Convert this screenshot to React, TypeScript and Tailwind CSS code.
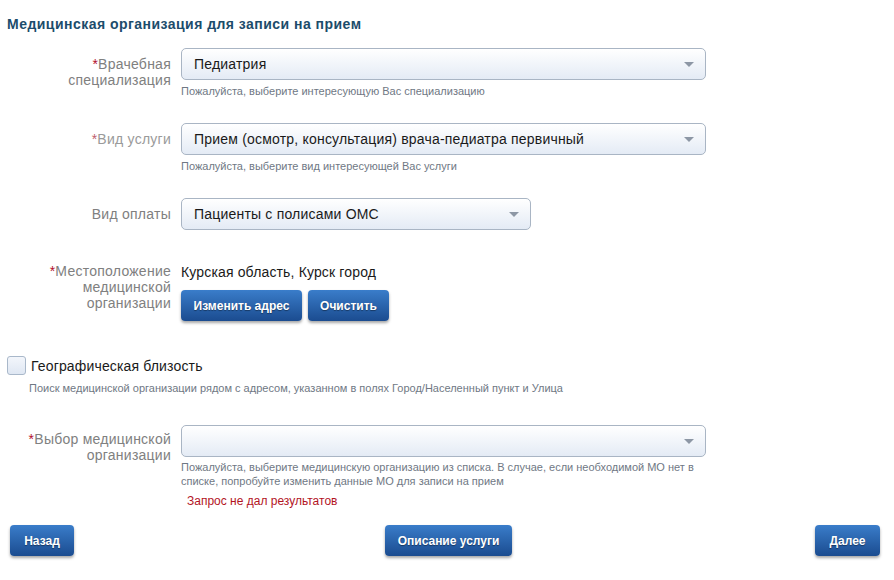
import React from "react";

const font = { fontFamily: '"Liberation Sans", Arial, sans-serif' };

function Select({ value, width }: { value?: string; width: string }) {
  return (
    <div
      className={`${width} h-[32px] flex items-center justify-between rounded-[5px] border border-[#a9b5c4] bg-gradient-to-b from-white to-[#e4ebf5] pl-[12px] pr-[11px]`}
    >
      <span className="text-[14px] tracking-[0.2px] text-[#1a1a1a] whitespace-nowrap">{value ?? ""}</span>
      <span className="w-0 h-0 border-l-[5px] border-r-[5px] border-t-[5px] border-l-transparent border-r-transparent border-t-[#8d97a5]" />
    </div>
  );
}

function Btn({ children, w }: { children: React.ReactNode; w: string }) {
  return (
    <div className={`${w} h-[31px] flex items-center justify-center rounded-[4px] bg-gradient-to-b from-[#3a7dca] to-[#1b4c90] text-white text-[12px] font-bold shadow-[0_2px_3px_rgba(0,0,0,0.35)] [text-shadow:0_1px_1px_rgba(0,0,0,0.4)] whitespace-nowrap`}>
      {children}
    </div>
  );
}

function Label({ lines, req, light, pt }: { lines: string[]; req?: boolean; light?: boolean; pt: string }) {
  return (
    <div className={`w-[171px] shrink-0 text-right text-[14px] tracking-[0.25px] leading-[16px] ${light ? "text-[#9a9a9a]" : "text-[#808080]"} ${pt}`}>
      {lines.map((l, i) => (
        <div key={i}>
          {i === 0 && req && <span className={light ? "text-[#c0606e]" : "text-[#b3102c]"}>*</span>}
          {l}
        </div>
      ))}
    </div>
  );
}

function Hint({ children, className = "" }: { children: React.ReactNode; className?: string }) {
  return <div className={`text-[11px] leading-[14px] text-[#6f7884] ${className}`}>{children}</div>;
}

export default function App() {
  return (
    <div style={font} className="w-[894px] h-[580px] bg-white relative overflow-hidden">
      <div className="pt-[16px] pl-[7px] text-[14px] tracking-[0.47px] leading-[16px] font-bold text-[#1c4c6b]">
        Медицинская организация для записи на прием
      </div>

      {/* Row 1 */}
      <div className="flex gap-[10px] mt-[16px]">
        <Label lines={["Врачебная", "специализация"]} req pt="pt-[8px]" />
        <div>
          <Select value="Педиатрия" width="w-[525px]" />
          <Hint className="mt-[4px]">Пожалуйста, выберите интересующую Вас специализацию</Hint>
        </div>
      </div>

      {/* Row 2 */}
      <div className="flex gap-[10px] mt-[25px]">
        <Label lines={["Вид услуги"]} req light pt="pt-[8px]" />
        <div>
          <Select value="Прием (осмотр, консультация) врача-педиатра первичный" width="w-[525px]" />
          <Hint className="mt-[4px]">Пожалуйста, выберите вид интересующей Вас услуги</Hint>
        </div>
      </div>

      {/* Row 3 */}
      <div className="flex gap-[10px] mt-[25px]">
        <Label lines={["Вид оплаты"]} pt="pt-[8px]" />
        <div>
          <Select value="Пациенты с полисами ОМС" width="w-[350px]" />
        </div>
      </div>

      {/* Row 4 */}
      <div className="flex gap-[10px] mt-[33px]">
        <Label lines={["Местоположение", "медицинской", "организации"]} req pt="pt-0" />
        <div className="pt-[1px]">
          <div className="text-[14px] tracking-[0.15px] leading-[16px] text-[#1a1a1a]">Курская область, Курск город</div>
          <div className="flex gap-[6px] mt-[10px]">
            <Btn w="w-[121px]">Изменить адрес</Btn>
            <Btn w="w-[81px]">Очистить</Btn>
          </div>
        </div>
      </div>

      {/* Checkbox */}
      <div className="flex items-center gap-[5px] pl-[7px] mt-[35px]">
        <div className="w-[19px] h-[19px] rounded-[3px] border border-[#a9b8ca] bg-gradient-to-b from-[#f3f6fb] to-[#dfe7f3]" />
        <span className="text-[14px] tracking-[0.15px] leading-[16px] text-[#1a1a1a]">Географическая близость</span>
      </div>
      <Hint className="pl-[29px] mt-[6px] text-[#6a7d92]">
        Поиск медицинской организации рядом с адресом, указанном в полях Город/Населенный пункт и Улица
      </Hint>

      {/* Row 5 */}
      <div className="flex gap-[10px] mt-[30px]">
        <Label lines={["Выбор медицинской", "организации"]} req pt="pt-[6px]" />
        <div>
          <Select width="w-[525px]" />
          <Hint className="mt-[3px] w-[525px]">
            Пожалуйста, выберите медицинскую организацию из списка. В случае, если необходимой МО нет в списке, попробуйте изменить данные МО для записи на прием
          </Hint>
          <div className="mt-[5px] pl-[6px] text-[12px] leading-[16px] text-[#b3141f]">Запрос не дал результатов</div>
        </div>
      </div>

      {/* Bottom buttons */}
      <div className="grid grid-cols-[1fr_auto_1fr] items-center pl-[10px] pr-[14px] mt-[16px]">
        <div className="justify-self-start"><Btn w="w-[64px]">Назад</Btn></div>
        <div className="ml-[7px]"><Btn w="w-[127px]">Описание услуги</Btn></div>
        <div className="justify-self-end"><Btn w="w-[65px]">Далее</Btn></div>
      </div>
    </div>
  );
}
